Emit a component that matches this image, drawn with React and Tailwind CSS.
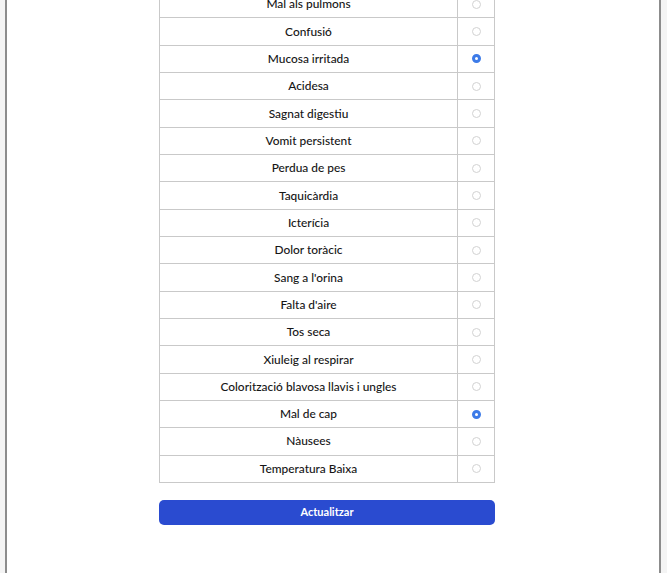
import React, { useState } from 'react';

const symptoms = [
    'Mal als pulmons',
    'Confusió',
    'Mucosa irritada',
    'Acidesa',
    'Sagnat digestiu',
    'Vomit persistent',
    'Perdua de pes',
    'Taquicàrdia',
    'Icterícia',
    'Dolor toràcic',
    "Sang a l'orina",
    "Falta d'aire",
    'Tos seca',
    'Xiuleig al respirar',
    'Colorització blavosa llavis i ungles',
    'Mal de cap',
    'Nàusees',
    'Temperatura Baixa',
];

const Radio = ({ checked, onClick }) => (
    <button
        onClick={onClick}
        className={`w-[9px] h-[9px] rounded-full ${checked ? 'border-[3px] border-[#3d7be8] bg-white' : 'border border-[#d2d2d2] bg-white'}`}
    />
);

const App = () => {
    const [selected, setSelected] = useState({ 'Mucosa irritada': true, 'Mal de cap': true });

    const toggle = (name) => setSelected((s) => ({ ...s, [name]: !s[name] }));

    return (
        <div className="h-[573px] overflow-hidden bg-[#f4f4f4] font-['Lato','Open_Sans',sans-serif]">
            <div className="ml-[5px] w-[656px] h-full flex flex-col bg-white border-l-2 border-r-2 border-[#8c8c8c]">
                <div className="ml-[152px] w-[336px] -mt-[10px]">
                    {/* Symptoms table */}
                    <div className="border border-[#c9c9c9] border-t-0">
                        {symptoms.map((name, idx) => (
                            <div key={idx} className="flex h-[27.33px] border-t border-[#c9c9c9]">
                                <div className="flex-1 flex items-center justify-center text-[11.9px] font-medium text-[#161616] border-r border-[#c9c9c9]">
                                    {name}
                                </div>
                                <div className="w-[36px] flex items-center justify-center">
                                    <Radio checked={!!selected[name]} onClick={() => toggle(name)} />
                                </div>
                            </div>
                        ))}
                    </div>

                    <button className="mt-[17px] w-full h-[25px] rounded-[5px] bg-[#2a4bd0] text-white text-[11px] font-bold">
                        Actualitzar
                    </button>
                </div>
            </div>
        </div>
    );
};

export default App;
